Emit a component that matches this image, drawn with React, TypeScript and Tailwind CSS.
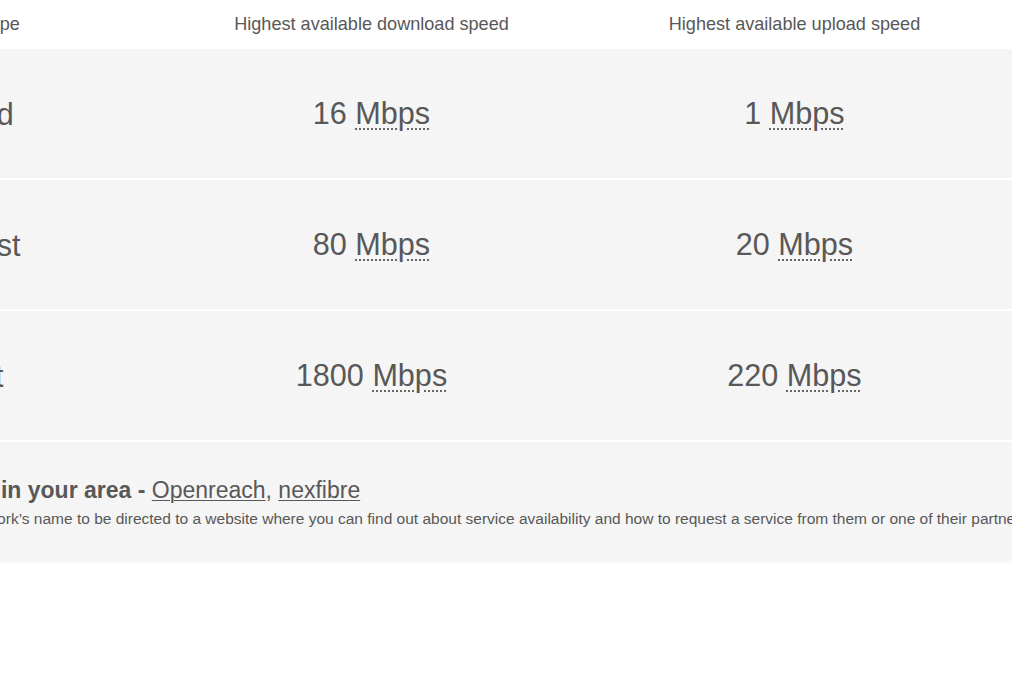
import React from 'react';

type SpeedRow = {
  label: string;
  download: number;
  upload: number;
};

const rows: SpeedRow[] = [
  { label: 'Standard', download: 16, upload: 1 },
  { label: 'Superfast', download: 80, upload: 20 },
  { label: 'Ultrafast', download: 1800, upload: 220 },
];

const networks = ['Openreach', 'nexfibre'];

// Speed value with the dotted "Mbps" abbreviation
function Speed({ value }: { value: number }) {
  return (
    <span className="text-[30.6px] leading-none">
      {value}{' '}
      <abbr
        title="Megabits per second"
        className="no-underline underline decoration-dotted decoration-[1.5px] underline-offset-[5px] decoration-[#666]"
      >
        Mbps
      </abbr>
    </span>
  );
}

export default function App() {
  return (
    <div className="w-full h-[700px] overflow-hidden bg-white text-[#585858] font-['Liberation_Sans',Arial,sans-serif]">
      <div className="ml-[-140px] w-[1400px]">
        {/* Header */}
        <div className="grid grid-cols-[300px_423px_423px_1fr] h-[49px] items-center text-[18.1px]">
          <div className="pl-8">Broadband type</div>
          <div className="text-center">Highest available download speed</div>
          <div className="text-center">Highest available upload speed</div>
          <div />
        </div>

        {/* Speed rows */}
        <div className="flex flex-col">
          {rows.map((row) => (
            <div
              key={row.label}
              className="grid grid-cols-[300px_423px_423px_1fr] h-[131px] items-center bg-[#f5f5f5] border-b-2 border-white pt-[1px]"
            >
              <div className="pl-[30px] text-[30.5px] leading-none">{row.label}</div>
              <div className="text-center">
                <Speed value={row.download} />
              </div>
              <div className="text-center">
                <Speed value={row.upload} />
              </div>
              <div />
            </div>
          ))}
        </div>

        {/* Networks footer */}
        <div className="bg-[#f5f5f5] pl-8 pt-[34px] pb-[32px] shadow-[0_2px_3px_rgba(0,0,0,0.03)]">
          <p className="text-[23px] leading-[28px] -ml-[1px]">
            <span className="font-bold">Networks in your area - </span>
            {networks.map((name, i) => (
              <React.Fragment key={name}>
                <a href="#" className="underline underline-offset-2 decoration-1 text-[#585858]">
                  {name}
                </a>
                {i < networks.length - 1 && ', '}
              </React.Fragment>
            ))}
          </p>
          <p className="mt-[5px] text-[15.5px] leading-[20px] whitespace-nowrap">
            Click on a network’s name to be directed to a website where you can find out about service availability and how to request a service from them or one of their partners.
          </p>
        </div>
      </div>
    </div>
  );
}
